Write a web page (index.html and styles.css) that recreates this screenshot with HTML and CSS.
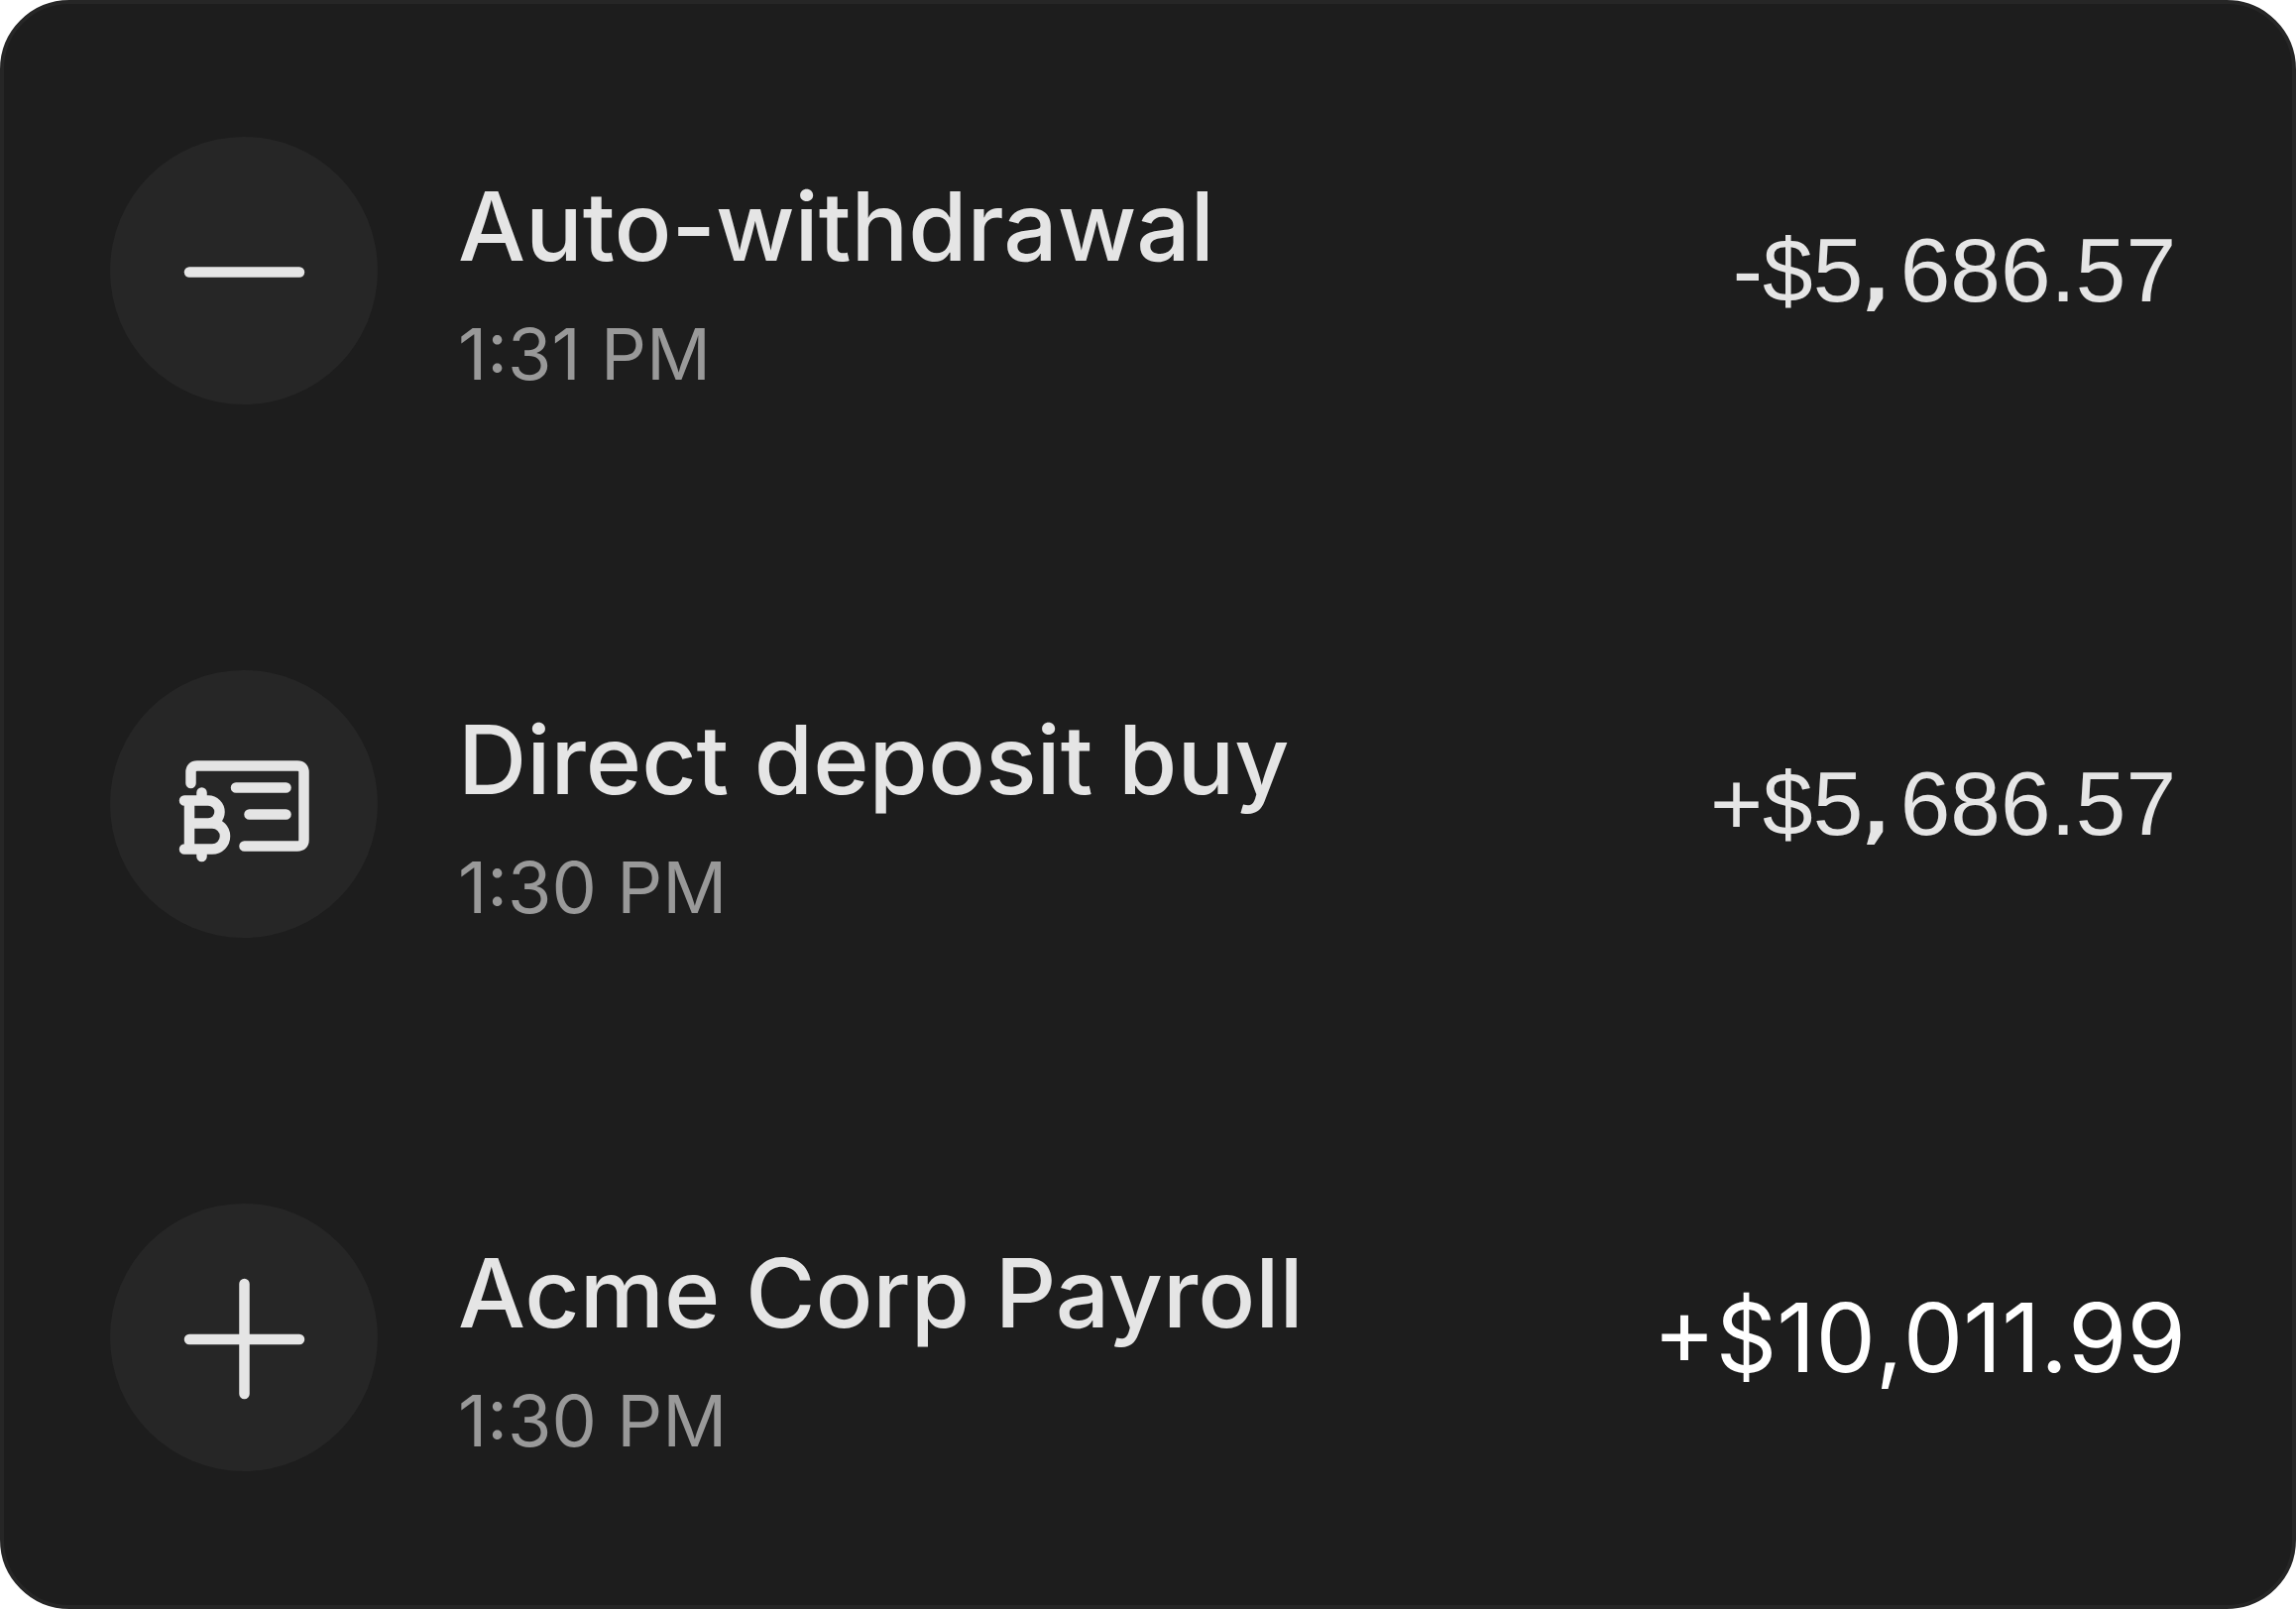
FILE: index.html
```html
<!DOCTYPE html>
<html lang="en">
<head>
  <meta charset="UTF-8" />
  <meta name="viewport" content="width=device-width, initial-scale=1.0" />
  <title>Activity</title>
  <link rel="stylesheet" href="styles.css">
</head>
<body>
  <main class="card">
    <ul class="transactions">
      <li class="transaction">
        <div class="icon">
          <svg viewBox="0 0 270 270" aria-hidden="true">
            <path d="M80 136.5H191" />
          </svg>
        </div>
        <div class="details">
          <div class="name">Auto-withdrawal</div>
          <div class="time">1:31 PM</div>
        </div>
        <div class="amount">-$5<span class="comma">,</span>686.57</div>
      </li>
      <li class="transaction">
        <div class="icon">
          <svg viewBox="0 0 270 270" aria-hidden="true">
            <path d="M81.5 114V103Q81.5 96.5 88 96.5H189Q195.5 96.5 195.5 103V171Q195.5 177.5 189 177.5H135.5" />
            <path d="M127 118.5H177.5M140.5 145.5H177.5" />
            <path d="M75 131.5H99A11.5 11.5 0 0 1 99 154.5H80M99 154.5H103A13 13 0 0 1 103 180.5H75M80 131.5V180.5M92.5 123.5V131.5M92.5 180.5V188" />
          </svg>
        </div>
        <div class="details">
          <div class="name">Direct deposit buy</div>
          <div class="time">1:30 PM</div>
        </div>
        <div class="amount">+$5<span class="comma">,</span>686.57</div>
      </li>
      <li class="transaction">
        <div class="icon">
          <svg viewBox="0 0 270 270" aria-hidden="true">
            <path d="M80 137H191M135.5 81V192" />
          </svg>
        </div>
        <div class="details">
          <div class="name">Acme Corp Payroll</div>
          <div class="time">1:30 PM</div>
        </div>
        <div class="amount large">+$10,011.99</div>
      </li>
    </ul>
  </main>
</body>
</html>
```
FILE: styles.css
```css
* {
  box-sizing: border-box;
}

body {
  margin: 0;
  background-color: #fff;
  color: #e5e5e5;
  font-family: Inter, sans-serif;
}

.card {
  min-height: 100vh;
  padding: 134px 107px;
  border: 4px solid #262626;
  border-radius: 70px;
  background-color: #1d1d1d;
}

.transactions {
  display: flex;
  flex-direction: column;
  gap: 268px;
  margin: 0;
  padding: 0;
  list-style: none;
}

.transaction {
  display: flex;
  align-items: center;
  gap: 81px;
}

.icon {
  flex: none;
  width: 270px;
  height: 270px;
  border-radius: 50%;
  background-color: #262626;
}

.icon svg {
  display: block;
  fill: none;
  stroke: #e5e5e5;
  stroke-width: 10.5;
  stroke-linecap: round;
  stroke-linejoin: round;
}

.details {
  display: flex;
  flex: 1;
  flex-direction: column;
  gap: 25px;
  padding-top: 23px;
}

.name {
  font-size: 96px;
  font-weight: 500;
  line-height: 120px;
}

.time {
  color: #999;
  font-size: 72px;
  font-kerning: none;
  line-height: 88px;
}

.amount {
  padding-right: 10px;
  font-family: "Liberation Sans", Arial, sans-serif;
  font-size: 91px;
}

.comma {
  padding-right: 10px;
  font-family: "DejaVu Sans", sans-serif;
  font-size: 72px;
  font-weight: 700;
  line-height: 1;
}

.large {
  padding-right: 0;
  color: #fff;
  font-family: Inter, sans-serif;
  font-size: 96px;
  font-kerning: none;
}
```
